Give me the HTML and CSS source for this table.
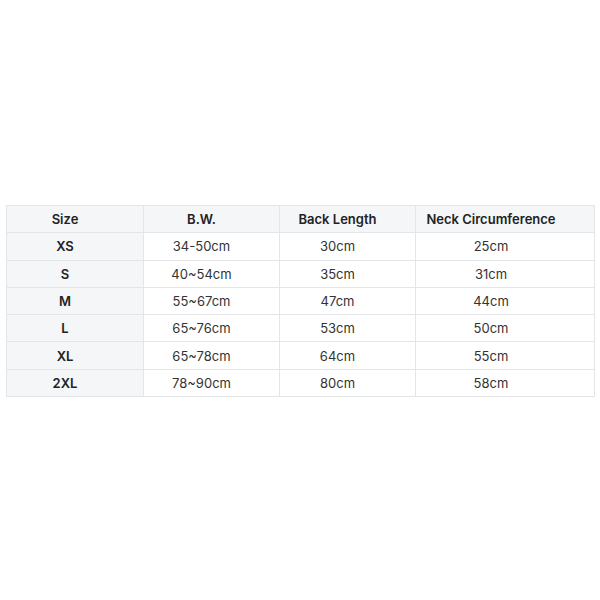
FILE: index.html
```html
<!DOCTYPE html>
<html>
<head>
<meta charset="utf-8">
<link rel="stylesheet" href="styles.css">
</head>
<body>
<div class="page">
  <table class="size-table">
    <colgroup>
      <col class="c1"><col class="c2"><col class="c3"><col class="c4">
    </colgroup>
    <thead>
      <tr><th>Size</th><th>B.W.</th><th>Back Length</th><th class="last">Neck Circumference</th></tr>
    </thead>
    <tbody>
      <tr><th>XS</th><td>34-50cm</td><td>30cm</td><td class="last">25cm</td></tr>
      <tr><th>S</th><td>40~54cm</td><td>35cm</td><td class="last">31cm</td></tr>
      <tr><th>M</th><td>55~67cm</td><td>47cm</td><td class="last">44cm</td></tr>
      <tr><th>L</th><td>65~76cm</td><td>53cm</td><td class="last">50cm</td></tr>
      <tr><th>XL</th><td>65~78cm</td><td>64cm</td><td class="last">55cm</td></tr>
      <tr><th>2XL</th><td>78~90cm</td><td>80cm</td><td class="last">58cm</td></tr>
    </tbody>
  </table>
</div>
</body>
</html>
```
FILE: styles.css
```css
html, body {
  margin: 0;
  padding: 0;
  background: #ffffff;
}
.page {
  width: 600px;
  height: 600px;
  padding-top: 205px;
  padding-left: 6px;
  box-sizing: border-box;
  font-family: Inter, "Liberation Sans", sans-serif;
  font-size: 13px;
  color: #333;
}
.size-table {
  width: 588px;
  border-collapse: collapse;
  table-layout: fixed;
}
.c1 { width: 137px; }
.c2 { width: 136px; }
.c3 { width: 136px; }
.c4 { width: 179px; }
.size-table th,
.size-table td {
  height: 26.3px;
  padding: 0 20px 0 0;
  border: 1px solid #e3e5e9;
  text-align: center;
  vertical-align: middle;
  line-height: 16px;
}
.size-table .last { padding-right: 28px; }
.size-table th {
  font-weight: 600;
  color: #222;
}
.size-table thead th,
.size-table tbody th {
  background: #f5f6f8;
}
.size-table td {
  font-weight: 400;
  color: #333;
}
```
